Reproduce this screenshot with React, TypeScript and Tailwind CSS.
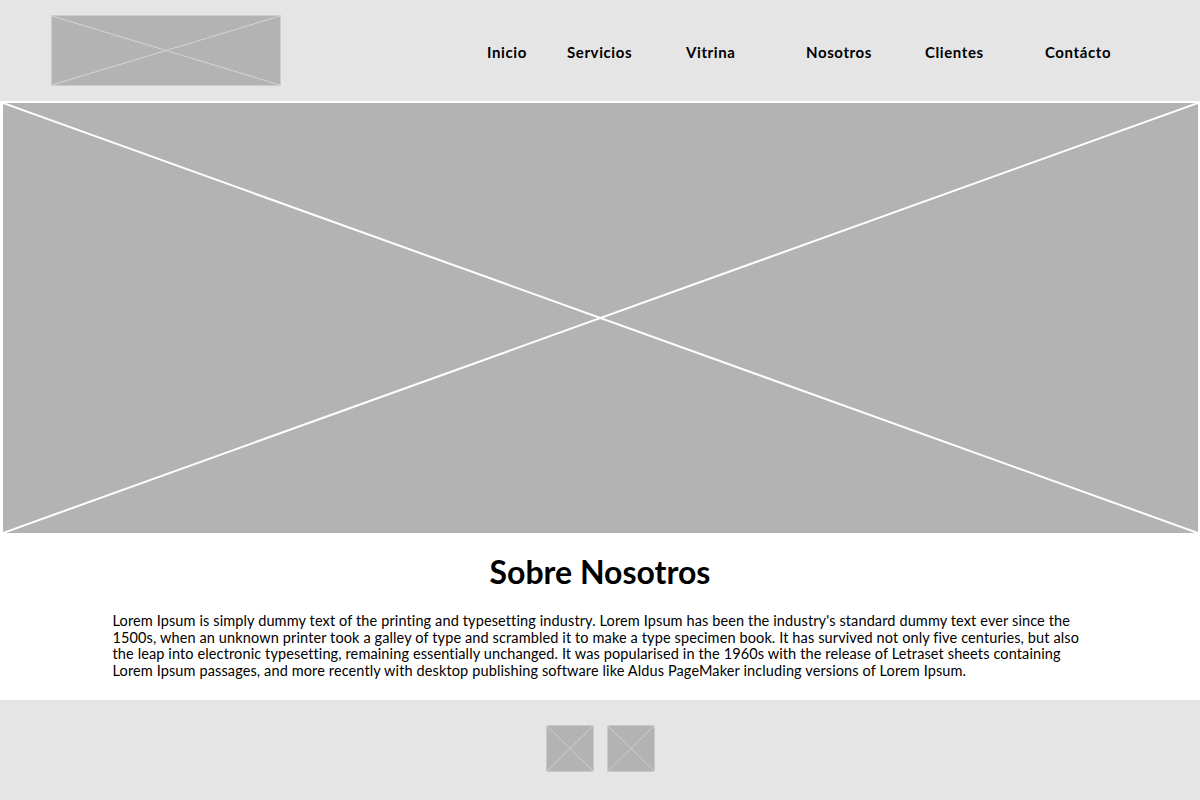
import React from 'react'

function Placeholder({ className, stroke, strokeWidth = 1 }: { className: string; stroke: string; strokeWidth?: number }) {
  return (
    <div className={className}>
      <svg className="block h-full w-full" viewBox="0 0 100 100" preserveAspectRatio="none">
        <line x1="0" y1="0" x2="100" y2="100" stroke={stroke} strokeWidth={strokeWidth} vectorEffect="non-scaling-stroke" />
        <line x1="100" y1="0" x2="0" y2="100" stroke={stroke} strokeWidth={strokeWidth} vectorEffect="non-scaling-stroke" />
      </svg>
    </div>
  )
}

const links = [
  { label: 'Inicio', w: 'w-[80px]' },
  { label: 'Servicios', w: 'w-[119px]' },
  { label: 'Vitrina', w: 'w-[120px]' },
  { label: 'Nosotros', w: 'w-[119px]' },
  { label: 'Clientes', w: 'w-[120px]' },
  { label: 'Contácto', w: 'w-[88px]' },
]

export default function App() {
  return (
    <div className="w-[1200px] h-[800px] bg-white text-black font-['Lato',sans-serif] flex flex-col">
      <header className="h-[101px] bg-[#e5e5e5] flex items-center shrink-0">
        <Placeholder className="ml-[51px] w-[230px] h-[71px] bg-[#b3b3b3] border border-[#cdcdcd]" stroke="#d4d4d4" />
        <nav className="ml-[206px] flex items-center mt-[4px]">
          {links.map((l) => (
            <a key={l.label} href="#" className={`${l.w} text-[15px] font-bold tracking-[0.6px] text-black`}>
              {l.label}
            </a>
          ))}
        </nav>
      </header>

      <Placeholder className="mt-[2px] ml-[3px] w-[1195px] h-[430px] bg-[#b3b3b3] shrink-0" stroke="#ffffff" strokeWidth={2} />

      <main className="flex-1 flex flex-col items-center">
        <h1 className="mt-[20px] text-[32px] leading-[38px] font-bold">Sobre Nosotros</h1>
        <p className="mt-[22px] w-[975px] text-[14.5px] leading-[16.7px] tracking-[0.12px]">
          Lorem Ipsum is simply dummy text of the printing and typesetting industry. Lorem Ipsum has been the industry's standard dummy text ever since the
          1500s, when an unknown printer took a galley of type and scrambled it to make a type specimen book. It has survived not only five centuries, but also
          the leap into electronic typesetting, remaining essentially unchanged. It was popularised in the 1960s with the release of Letraset sheets containing
          Lorem Ipsum passages, and more recently with desktop publishing software like Aldus PageMaker including versions of Lorem Ipsum.
        </p>
      </main>

      <footer className="h-[100px] bg-[#e5e5e5] flex items-start justify-center gap-[13px] pt-[25px] shrink-0">
        <Placeholder className="w-[48px] h-[47px] bg-[#b3b3b3] border border-[#c9c9c9] rounded-[2px] overflow-hidden" stroke="#cecece" />
        <Placeholder className="w-[48px] h-[47px] bg-[#b3b3b3] border border-[#c9c9c9] rounded-[2px] overflow-hidden" stroke="#cecece" />
      </footer>
    </div>
  )
}
